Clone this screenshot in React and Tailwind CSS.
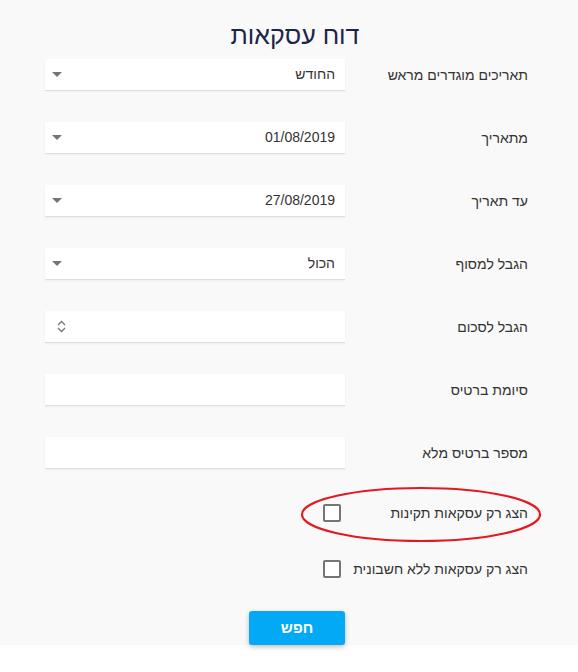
import React from "react";

const fields = [
  { label: "תאריכים מוגדרים מראש", value: "החודש", kind: "select" },
  { label: "מתאריך", value: "01/08/2019", kind: "select" },
  { label: "עד תאריך", value: "27/08/2019", kind: "select" },
  { label: "הגבל למסוף", value: "הכול", kind: "select" },
  { label: "הגבל לסכום", value: "", kind: "number" },
  { label: "סיומת ברטיס", value: "", kind: "text" },
  { label: "מספר ברטיס מלא", value: "", kind: "text" },
];

function Caret() {
  return (
    <svg width="10" height="5" viewBox="0 0 10 5" className="shrink-0">
      <path d="M0 0h10L5 5z" fill="#757575" />
    </svg>
  );
}

function Spinner() {
  return (
    <svg width="9" height="13" viewBox="0 0 9 13" className="shrink-0">
      <path d="M1 5l3.5-3.5L8 5M1 8l3.5 3.5L8 8" fill="none" stroke="#757575" strokeWidth="1.3" />
    </svg>
  );
}

function Field({ label, value, kind }) {
  return (
    <div className="flex items-center h-[32px]">
      <div className="w-[183px] shrink-0 text-[14px] text-[#333]">{label}</div>
      <div className="w-[300px] h-[32px] bg-white border-b border-[#dedede] shadow-[0_1px_2px_rgba(0,0,0,0.05)] flex items-center justify-between pr-[10px] pl-[7px]">
        <span className="text-[14px] text-[#333]">{value}</span>
        {kind === "select" && <Caret />}
        {kind === "number" && (
          <span className="pl-[5px]">
            <Spinner />
          </span>
        )}
      </div>
    </div>
  );
}

function CheckRow({ label, className }) {
  return (
    <div className={`flex items-center h-[32px] ${className}`}>
      <div className="w-[183px] shrink-0 text-[14px] text-[#333]">{label}</div>
      <div className="pr-[4px]">
        <div className="w-[18px] h-[18px] border-2 border-[#757575] rounded-[2px] bg-white" />
      </div>
    </div>
  );
}

export default function App() {
  return (
    <div className="bg-white min-h-[672px]" style={{ fontFamily: '"Liberation Sans", Arial, sans-serif' }}>
      <div dir="rtl" className="relative h-[645px] bg-[#f9f9f9] pr-[50px]">
        <h1 className="pt-[19px] h-[50px] text-center text-[25px] leading-[32px] text-[#1c2547] pl-[62px]">דוח עסקאות</h1>

        <div className="mt-[9px] flex flex-col gap-[31px]">
          {fields.map((f) => (
            <Field key={f.label} {...f} />
          ))}
        </div>

        <CheckRow label="הצג רק עסקאות תקינות" className="mt-[28px]" />
        <CheckRow label="הצג רק עסקאות ללא חשבונית" className="mt-[24px]" />

        <div className="mt-[26px] flex justify-center pl-[66px]">
          <button className="w-[96px] h-[34px] rounded-[3px] bg-[#03a9f4] text-white font-bold text-[15px] shadow-[0_2px_5px_rgba(0,0,0,0.25)]">
            חפש
          </button>
        </div>

        {/* annotation ellipse */}
        <svg className="absolute left-[300px] top-[486px]" width="242" height="57" viewBox="0 0 242 57">
          <ellipse cx="121" cy="28.5" rx="119" ry="26.5" fill="none" stroke="#e4191f" strokeWidth="2.2" />
        </svg>
      </div>
    </div>
  );
}
